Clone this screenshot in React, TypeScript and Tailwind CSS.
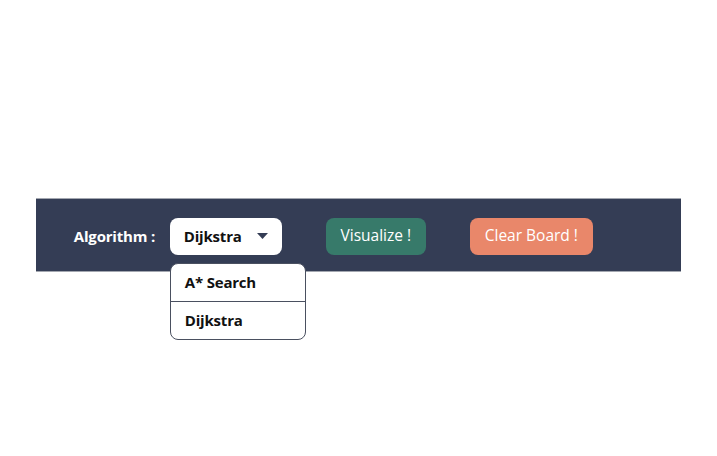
const algorithms = ["A* Search", "Dijkstra"];

export default function App() {
  return (
    <div className="min-h-[456px] w-full bg-white pt-[198px] font-['Open_Sans',sans-serif]">
      <nav className="mx-[5%] flex h-[74px] items-center border-y border-[#a3a7b0] bg-[#343d55] pl-[38px] pt-[2px]">
        <span className="w-[96px] text-[15px] font-bold tracking-[-0.2px] text-white">Algorithm :</span>

        <div className="relative">
          <button className="flex h-[37px] w-[112px] items-center justify-between rounded-lg bg-white pl-[14px] pr-[14px] text-[15px] font-bold tracking-[-0.2px] text-[#111]">
            Dijkstra
            <svg width="11" height="6" viewBox="0 0 11 6">
              <path d="M0 0h11L5.5 6z" fill="#343d55" />
            </svg>
          </button>
          <ul className="absolute left-0 top-[45px] w-[136px] overflow-hidden rounded-lg border border-[#4a5060] bg-white">
            {algorithms.map((name, i) => (
              <li
                key={name}
                className={
                  "flex h-[37px] items-center px-[14px] text-[15px] font-bold tracking-[-0.2px] text-[#111] " +
                  (i > 0 ? "h-[38px] border-t border-[#4a5060]" : "")
                }
              >
                {name}
              </li>
            ))}
          </ul>
        </div>

        <button className="ml-[44px] h-[37px] w-[100px] rounded-lg bg-[#377a6a] text-[15.5px] text-white">
          Visualize !
        </button>
        <button className="ml-[44px] h-[37px] w-[123px] rounded-lg bg-[#e9876a] text-[15.5px] text-white">
          Clear Board !
        </button>
      </nav>
    </div>
  );
}
